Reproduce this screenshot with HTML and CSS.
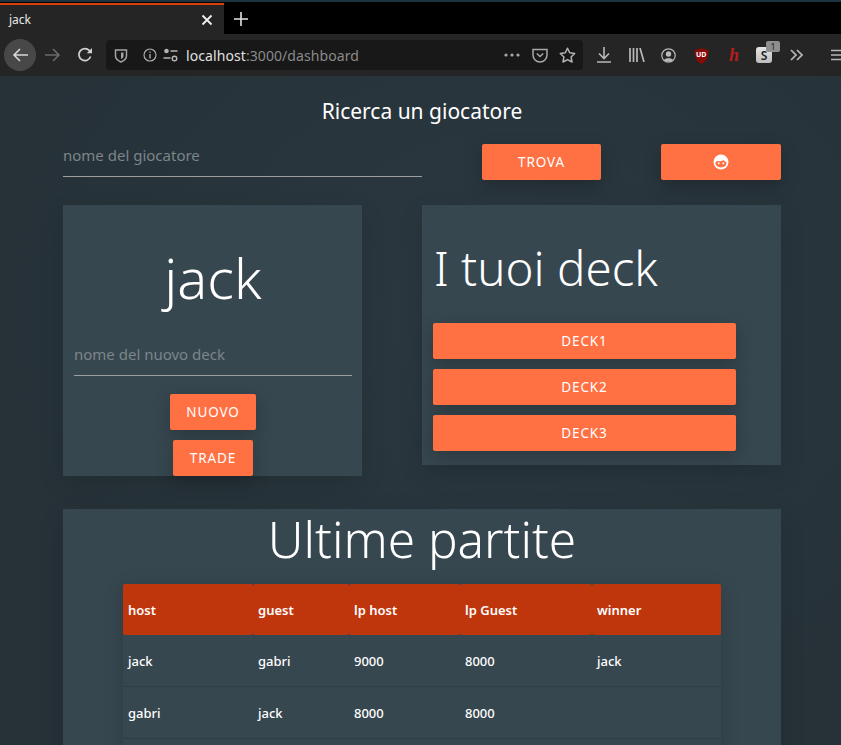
FILE: index.html
```html
<!DOCTYPE html>
<html lang="it">
<head>
    <meta charset="UTF-8">
    <title>jack</title>
    <link rel="stylesheet" href="styles.css">
</head>
<body>
    <div class="top-strip"></div>
    <div class="tabbar">
        <div class="tab">
            <span class="tab-title">jack</span>
            <svg class="tab-close" width="12" height="12" viewBox="0 0 12 12"><path d="M1.5 1.5l9 9M10.5 1.5l-9 9" stroke="#f2f2f2" stroke-width="1.8"/></svg>
        </div>
        <svg class="tab-new" width="14" height="14" viewBox="0 0 14 14"><path d="M7 0v14M0 7h14" stroke="#e4e4e4" stroke-width="1.6"/></svg>
    </div>
    <div class="toolbar">
        <div class="back-btn">
            <svg width="16" height="14" viewBox="0 0 16 14"><path d="M16 7H2M8 1L2 7l6 6" fill="none" stroke="#d8d8d8" stroke-width="1.6"/></svg>
        </div>
        <svg class="tool-forward" width="16" height="14" viewBox="0 0 16 14"><path d="M0 7h14M8 1l6 6-6 6" fill="none" stroke="#6a6a6a" stroke-width="1.6"/></svg>
        <svg class="tool-reload" width="16" height="16" viewBox="0 0 16 16"><path d="M13.6 9.5A6 6 0 1 1 12.4 3.6L14 5.2" fill="none" stroke="#d0d0d0" stroke-width="1.7"/><path d="M15 1v5.2H9.8z" fill="#d0d0d0"/></svg>
        <div class="urlbar">
            <svg class="url-shield" width="14" height="15" viewBox="0 0 14 15"><path d="M1.5 2h11v6c0 3-2.6 4.700-5.500 6C4.100 12.700 1.500 11 1.500 8z" fill="none" stroke="#a4a4a4" stroke-width="1.500"/><path d="M7 4.500h2.500v3.500c0 1.500-1.200 2.500-2.500 3.200z" fill="#a4a4a4"/></svg>
            <svg class="url-info" width="14" height="14" viewBox="0 0 14 14"><circle cx="7" cy="7" r="6" fill="none" stroke="#b4b4b4" stroke-width="1.100"/><path d="M7 6v4.500M7 3.400v1.400" stroke="#b4b4b4" stroke-width="1.300"/></svg>
            <svg class="url-perm" width="15" height="14" viewBox="0 0 15 14"><circle cx="3.500" cy="3" r="2.300" fill="#b4b4b4"/><path d="M7.500 3h7M0.500 10h7" stroke="#b4b4b4" stroke-width="1.500"/><circle cx="11.500" cy="10.500" r="2.300" fill="none" stroke="#b4b4b4" stroke-width="1.400"/></svg>
            <span class="url-text">localhost<span class="url-dim">:3000/dashboard</span></span>
            <span class="url-spacer"></span>
            <svg class="url-dots" width="16" height="4" viewBox="0 0 16 4"><circle cx="2" cy="2" r="1.600" fill="#a8a8a8"/><circle cx="8" cy="2" r="1.600" fill="#a8a8a8"/><circle cx="14" cy="2" r="1.600" fill="#a8a8a8"/></svg>
            <svg class="url-pocket" width="16" height="15" viewBox="0 0 16 15"><path d="M1 1.500h14v5.500a7 7 0 0 1-14 0z" fill="none" stroke="#a8a8a8" stroke-width="1.500"/><path d="M4.800 5.500L8 8.500l3.200-3" fill="none" stroke="#a8a8a8" stroke-width="1.600"/></svg>
            <svg class="url-star" width="17" height="16" viewBox="0 0 17 16"><path d="M8.500 1.200l2.200 4.600 5 .7-3.600 3.500.9 5-4.500-2.400L4 15l.9-5L1.300 6.500l5-.7z" fill="none" stroke="#b4b4b4" stroke-width="1.500" stroke-linejoin="round"/></svg>
        </div>
        <svg class="tool-icon tool-down" width="14" height="16" viewBox="0 0 14 16"><path d="M7 0v11M2 6.500L7 11.500l5-5M0 15h14" fill="none" stroke="#b8b8b8" stroke-width="1.600"/></svg>
        <svg class="tool-icon tool-lib" width="16" height="14" viewBox="0 0 16 14"><path d="M1 0v14M4.500 0v14M8 0v14M11 0l4 14" fill="none" stroke="#b8b8b8" stroke-width="1.700"/></svg>
        <svg class="tool-icon tool-acct" width="15" height="15" viewBox="0 0 15 15"><circle cx="7.500" cy="7.500" r="6.700" fill="none" stroke="#b8b8b8" stroke-width="1.200"/><circle cx="7.500" cy="6" r="2.700" fill="#b8b8b8"/><path d="M3 12c1-2.500 8-2.500 9 0-2 2-7 2-9 0z" fill="#b8b8b8"/></svg>
        <div class="tool-icon ublock">
            <svg width="15" height="16" viewBox="0 0 15 16"><path d="M.5 1.800C3 1.800 5.500 1.200 7.500 0c2 1.200 4.500 1.800 7 1.800 0 6-1 11-7 14.200C1.500 12.800.5 7.800.5 1.800z" fill="#8a0a0a"/></svg>
            <span class="ublock-label">UD</span>
        </div>
        <span class="tool-icon hypo">h</span>
        <div class="tool-icon sbox">
            <span class="sbox-letter">S</span>
            <span class="sbox-badge">1</span>
        </div>
        <svg class="tool-icon tool-more" width="13" height="12" viewBox="0 0 13 12"><path d="M1 1l5 5-5 5M7 1l5 5-5 5" fill="none" stroke="#b8b8b8" stroke-width="1.700"/></svg>
        <svg class="tool-menu" width="11" height="12" viewBox="0 0 11 12"><path d="M0 1.500h11M0 6h11M0 10.500h11" stroke="#b8b8b8" stroke-width="1.600"/></svg>
    </div>

    <main class="page">
        <h5 class="search-title">Ricerca un giocatore</h5>
        <div class="search-row">
            <input class="field search-field" type="text" placeholder="nome del giocatore">
            <button class="btn btn-trova">TROVA</button>
            <button class="btn btn-face">
                <svg width="16" height="16" viewBox="0 0 16 16"><circle cx="8" cy="8" r="7.500" fill="#fff"/><path d="M2.300 9.300C2.800 7.300 4 6.700 5.200 7c2 .5 4 .3 5.300-.9.800 1 2.200 1.200 3.200 3.200A5.800 5 0 0 1 2.300 9.300z" fill="#ff7043"/><circle cx="5.700" cy="9.300" r="1" fill="#fff"/><circle cx="10.300" cy="9.300" r="1" fill="#fff"/></svg>
            </button>
        </div>

        <div class="cards">
            <section class="card profile">
                <h2 class="profile-name">jack</h2>
                <input class="field deck-field" type="text" placeholder="nome del nuovo deck">
                <button class="btn btn-nuovo">NUOVO</button>
                <button class="btn btn-trade">TRADE</button>
            </section>
            <section class="card decks">
                <h2 class="decks-title">I tuoi deck</h2>
                <button class="btn btn-deck">DECK1</button>
                <button class="btn btn-deck">DECK2</button>
                <button class="btn btn-deck">DECK3</button>
            </section>
        </div>

        <section class="card games">
            <h2 class="games-title">Ultime partite</h2>
            <table class="games-table">
                <thead>
                    <tr><th>host</th><th>guest</th><th>lp host</th><th>lp Guest</th><th>winner</th></tr>
                </thead>
                <tbody>
                    <tr><td>jack</td><td>gabri</td><td>9000</td><td>8000</td><td>jack</td></tr>
                    <tr><td>gabri</td><td>jack</td><td>8000</td><td>8000</td><td></td></tr>
                    <tr><td></td><td></td><td></td><td></td><td></td></tr>
                </tbody>
            </table>
        </section>
    </main>
</body>
</html>
```

FILE: styles.css
```css
html, body {
    height: 745px;
    margin: 0;
    overflow: hidden;
}
body {
    font-family: "Noto Sans", sans-serif;
    background: #263238;
    color: #fff;
}

/* browser chrome */
.top-strip {
    height: 2px;
    background: #1c3441;
}
.tabbar {
    height: 32px;
    background: #000;
    display: flex;
    align-items: flex-end;
}
.tab {
    width: 224px;
    height: 31px;
    box-sizing: border-box;
    background: #252525;
    border-top: 2px solid #d8400e;
    display: flex;
    align-items: center;
    justify-content: space-between;
    padding: 0 11px 0 9px;
}
.tab-title {
    font-size: 12px;
    color: #e8e8e8;
}
.tab-new {
    margin: 0 0 8px 10px;
}
.toolbar {
    height: 42px;
    background: #252525;
    display: flex;
    align-items: center;
    position: relative;
}
.back-btn {
    width: 32px;
    height: 32px;
    margin-left: 4px;
    border-radius: 50%;
    background: #484848;
    display: flex;
    align-items: center;
    justify-content: center;
}
.tool-forward {
    margin-left: 9px;
}
.tool-reload {
    margin-left: 16px;
}
.urlbar {
    width: 477px;
    height: 30px;
    margin-left: 13px;
    box-sizing: border-box;
    padding: 0 7px 0 8px;
    background: #181818;
    border-radius: 4px;
    display: flex;
    align-items: center;
    flex-shrink: 0;
}
.url-info {
    margin-left: 15px;
}
.url-perm {
    margin-left: 6px;
}
.url-text {
    margin-left: 8px;
    font-size: 14px;
    letter-spacing: 0.08px;
    color: #e0e0e0;
}
.url-dim {
    color: #8a8a8a;
}
.url-spacer {
    flex: 1;
}
.url-pocket {
    margin-left: 12px;
}
.url-star {
    margin-left: 11px;
}
.tool-icon {
    flex-shrink: 0;
}
.tool-down {
    margin-left: 14px;
}
.tool-lib {
    margin-left: 18px;
}
.tool-acct {
    margin-left: 16px;
}
.ublock {
    margin-left: 18px;
    width: 15px;
    height: 16px;
    position: relative;
}
.ublock-label {
    position: absolute;
    top: 3px;
    left: 2px;
    font-size: 7px;
    font-weight: 700;
    color: #fff;
}
.hypo {
    margin-left: 20px;
    width: 9px;
    font-family: "Liberation Serif", serif;
    font-style: italic;
    font-weight: 700;
    font-size: 18px;
    color: #b71c1c;
}
.sbox {
    margin-left: 18px;
    width: 16px;
    height: 16px;
    background: linear-gradient(#e6e6e6, #bdbdbd);
    border-radius: 3px;
    position: relative;
    display: flex;
    align-items: center;
    justify-content: center;
}
.sbox-letter {
    font-size: 12px;
    font-weight: 600;
    color: #222;
}
.sbox-badge {
    position: absolute;
    top: -6px;
    right: -8px;
    width: 14px;
    height: 11px;
    border-radius: 2px;
    background: #8e8e8e;
    color: #222;
    font-size: 9px;
    line-height: 11px;
    text-align: center;
}
.tool-more {
    margin-left: 18px;
}
.tool-menu {
    position: absolute;
    left: 831px;
    top: 15px;
}

/* page */
.page {
    height: 669px;
    box-sizing: border-box;
    padding: 0 60px 0 63px;
    background: radial-gradient(ellipse at 60% 35%, #2b3840 0%, #263238 70%);
}
.search-title {
    margin: 0;
    padding-top: 22px;
    height: 26px;
    font-size: 21px;
    font-weight: 400;
    line-height: 26px;
    text-align: center;
}
.field {
    background: transparent;
    border: none;
    border-bottom: 1px solid #9e9e9e;
    outline: none;
    padding: 0;
    font-family: inherit;
    font-size: 15px;
    color: #fff;
    box-sizing: content-box;
}
.field::placeholder {
    color: #7c8589;
    opacity: 1;
}
.search-row {
    display: flex;
    align-items: flex-start;
    margin-top: 20px;
}
.search-field {
    width: 359px;
    height: 21px;
    padding-bottom: 11px;
}
.btn {
    height: 36px;
    border: none;
    border-radius: 2px;
    background: #ff7043;
    color: #fff;
    font-family: inherit;
    font-size: 13.500px;
    letter-spacing: 0.9px;
    padding: 0;
    box-shadow: 0 6px 18px rgba(0, 0, 0, 0.22);
    display: block;
}
.btn-trova {
    width: 119px;
    margin-left: 60px;
}
.btn-face {
    width: 120px;
    margin-left: 60px;
    display: flex;
    align-items: center;
    justify-content: center;
}
.cards {
    display: flex;
    align-items: flex-start;
    margin-top: 25px;
    gap: 60px;
}
.card {
    background: #37474f;
    box-shadow: 0 8px 24px rgba(0, 0, 0, 0.12);
}
.profile {
    width: 299px;
    height: 271px;
    box-sizing: border-box;
    padding: 0 10px 0 11px;
    display: flex;
    flex-direction: column;
    align-items: center;
}
.profile-name {
    margin: 34px 0 0;
    font-size: 56px;
    font-weight: 300;
    line-height: 76px;
}
.deck-field {
    width: 278px;
    margin-top: 26px;
    height: 26px;
    padding-bottom: 8px;
}
.btn-nuovo {
    width: 86px;
    margin-top: 18px;
}
.btn-trade {
    width: 80px;
    margin-top: 10px;
}
.decks {
    width: 359px;
    height: 260px;
    box-sizing: border-box;
    padding: 0 45px 0 11px;
}
.decks-title {
    margin: 25px 0 18px 1px;
    font-size: 47.500px;
    font-weight: 300;
    line-height: 75px;
}
.btn-deck {
    width: 303px;
    margin-bottom: 10px;
}
.games {
    margin-top: 33px;
    height: 300px;
    padding: 0 60px;
}
.games-title {
    margin: 0;
    font-size: 49.500px;
    font-weight: 300;
    line-height: 60px;
    text-align: center;
}
.games-table {
    width: 598px;
    margin-top: 15px;
    border-collapse: separate;
    border-spacing: 0;
    table-layout: fixed;
    font-size: 13px;
    font-weight: 500;
    box-shadow: 0 4px 18px rgba(0, 0, 0, 0.16);
}
.games-table th:nth-child(1) { width: 130px; }
.games-table th:nth-child(2) { width: 96px; }
.games-table th:nth-child(3) { width: 111px; }
.games-table th:nth-child(4) { width: 132px; }
.games-table th, .games-table td {
    box-sizing: border-box;
    padding: 0 5px;
    text-align: left;
}
.games-table th {
    height: 51px;
    font-weight: 600;
    background: #bf360c;
    border-radius: 2px;
}
.games-table td {
    height: 52px;
    border-bottom: 1px solid #2f3d44;
}
```
